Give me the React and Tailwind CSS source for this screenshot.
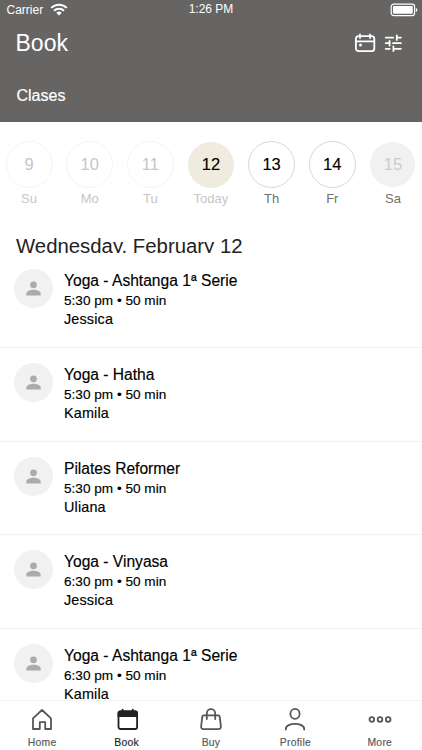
import React from 'react';

const days = [
  { n: '9', d: 'Su', circle: 'size-[47px] border border-[#f4f4f4] text-[#c6c6c6]', label: 'text-[#c6c6c6]' },
  { n: '10', d: 'Mo', circle: 'size-[47px] border border-[#f4f4f4] text-[#c6c6c6]', label: 'text-[#c6c6c6]' },
  { n: '11', d: 'Tu', circle: 'size-[47px] border border-[#f4f4f4] text-[#c6c6c6]', label: 'text-[#c6c6c6]' },
  { n: '12', d: 'Today', circle: 'size-[46px] bg-[#efebdf] text-black [-webkit-text-stroke:0.15px]', label: 'text-[#c6c6c6]' },
  { n: '13', d: 'Th', circle: 'size-[47px] border border-[#d8d8d8] text-black [-webkit-text-stroke:0.15px]', label: 'text-[#707070]' },
  { n: '14', d: 'Fr', circle: 'size-[47px] border border-[#d8d8d8] text-black [-webkit-text-stroke:0.15px]', label: 'text-[#707070]' },
  { n: '15', d: 'Sa', circle: 'size-[45px] bg-[#f1f1f1] text-[#cbcbcb]', label: 'text-[#707070]' },
];

const classes = [
  { title: 'Yoga - Ashtanga 1ª Serie', time: '5:30 pm • 50 min', who: 'Jessica' },
  { title: 'Yoga - Hatha', time: '5:30 pm • 50 min', who: 'Kamila' },
  { title: 'Pilates Reformer', time: '5:30 pm • 50 min', who: 'Uliana' },
  { title: 'Yoga - Vinyasa', time: '6:30 pm • 50 min', who: 'Jessica' },
  { title: 'Yoga - Ashtanga 1ª Serie', time: '6:30 pm • 50 min', who: 'Kamila' },
];

const stroke = { fill: 'none', stroke: 'currentColor', strokeWidth: 1.8, strokeLinecap: 'round', strokeLinejoin: 'round' };

function Wifi() {
  return (
    <svg width="18" height="13" viewBox="0 0 18 13" fill="none" stroke="white" strokeWidth="2">
      <path d="M1.2 4.9a11 11 0 0 1 15.6 0" />
      <path d="M4 7.8a7 7 0 0 1 10 0" />
      <path d="M9 12.5L6.3 9.8a3.9 3.9 0 0 1 5.4 0z" fill="white" stroke="none" />
    </svg>
  );
}

function Battery() {
  return (
    <svg width="28" height="14" viewBox="0 0 28 14">
      <rect x="1.2" y="1.2" width="23.4" height="11.4" rx="2.6" fill="none" stroke="white" strokeWidth="1.2" />
      <rect x="3" y="3" width="19.8" height="7.8" rx="1" fill="white" />
      <path d="M25.9 4.9c1.9.6 1.9 3.4 0 4z" fill="white" />
    </svg>
  );
}

function Calendar() {
  return (
    <svg width="22" height="20" viewBox="0 0 22 20" fill="none" stroke="white" strokeWidth="1.8" strokeLinecap="round">
      <rect x="1.9" y="3.1" width="18.4" height="15" rx="2.6" />
      <path d="M1.9 8.4h18.4M6 1.4v3.6M16 1.4v3.6" />
      <circle cx="6.5" cy="12" r="1.5" fill="white" stroke="none" />
    </svg>
  );
}

function Tune() {
  return (
    <svg width="18" height="18" viewBox="0 0 18 18" fill="none" stroke="white" strokeWidth="1.8" strokeLinecap="round">
      <path d="M1.7 3.6h7.6M13 3.6h3.9M12.8 1.3v4.6M1.7 9.2h3.6M9 9.2h7.9M5.6 6.9v4.6M1.7 14.8h4M9.6 14.8h7.3M9.4 12.5v4.6" />
    </svg>
  );
}

function Person() {
  return (
    <svg width="15" height="15" viewBox="0 0 15 15" fill="#ababab">
      <circle cx="7.5" cy="3.8" r="3.4" />
      <path d="M0.3 14.4v-1.8c0-2.4 4.1-3.8 7.2-3.8s7.2 1.4 7.2 3.8v1.8z" />
    </svg>
  );
}

const tabs = [
  {
    name: 'Home',
    icon: <path {...stroke} d="M4 11.4L13 3l9 8.4V22h-5.8v-6.8h-5.4V22H4z" />,
  },
  {
    name: 'Book',
    icon: (
      <g>
        <rect x="4.5" y="4.4" width="18.6" height="17.6" rx="2" {...stroke} />
        <path d="M3.6 10V6.2a2.6 2.6 0 0 1 2.6-2.6h15.2A2.6 2.6 0 0 1 24 6.2V10z" fill="currentColor" />
        <path d="M8.6 2.6v3M18.8 2.6v3" {...stroke} />
      </g>
    ),
  },
  {
    name: 'Buy',
    icon: (
      <g {...stroke}>
        <path d="M5.7 8.4h14.6a1.4 1.4 0 0 1 1.4 1.2l1.2 9.9a2.3 2.3 0 0 1-2.3 2.6H5.4a2.3 2.3 0 0 1-2.3-2.6l1.2-9.9a1.4 1.4 0 0 1 1.4-1.2z" />
        <path d="M8.8 12V6.4a4.2 4.2 0 0 1 8.4 0V12" />
      </g>
    ),
  },
  {
    name: 'Profile',
    icon: (
      <g {...stroke}>
        <ellipse cx="13" cy="6.9" rx="4.6" ry="5" />
        <path d="M3.8 22.5v-.6c0-6.8 18.4-6.8 18.4 0v.6" />
      </g>
    ),
  },
  {
    name: 'More',
    icon: (
      <g {...stroke}>
        <circle cx="4.8" cy="12.5" r="2.3" />
        <circle cx="13" cy="12.5" r="2.3" />
        <circle cx="21.2" cy="12.5" r="2.3" />
      </g>
    ),
  },
];

export default function App() {
  return (
    <div className="flex h-[750px] w-[422px] flex-col overflow-hidden bg-white font-['Liberation_Sans',Arial,sans-serif]">
      <header className="flex h-[122px] shrink-0 flex-col bg-[#666563] text-white">
        <div className="grid h-5 grid-cols-3 text-[12px] leading-5">
          <div className="flex items-start gap-[7px] pl-[6.5px]">
            <span>Carrier</span>
            <span className="pt-[3px]"><Wifi /></span>
          </div>
          <span className="text-center leading-[18px]">1:26 PM</span>
          <span className="flex justify-end pt-[3px] pr-[4px]"><Battery /></span>
        </div>
        <div className="flex h-[46px] items-center pr-5 pl-[15.5px]">
          <h1 className="flex-1 text-[23px] leading-[44px]">Book</h1>
          <div className="flex items-center gap-[8px]">
            <Calendar />
            <Tune />
          </div>
        </div>
        <div className="pt-[18px] pl-[16.5px] text-[16px] leading-[24px] [-webkit-text-stroke:0.2px]">Clases</div>
      </header>

      <div className="flex h-[110px] shrink-0 justify-between pt-[19px] pr-[5.5px] pl-[5.5px]">
        {days.map((day) => (
          <div key={day.n} className="flex w-[47px] flex-col items-center">
            <div className="flex size-[47px] items-center justify-center">
              <div className={`flex items-center justify-center rounded-full text-[16.5px] ${day.circle}`}>{day.n}</div>
            </div>
            <span className={`mt-px text-[13px] leading-5 ${day.label}`}>{day.d}</span>
          </div>
        ))}
      </div>

      <h2 className="mb-px h-[21px] shrink-0 overflow-hidden pl-4 text-[20.35px] leading-[29px] text-[#222]">Wednesday, February 12</h2>

      <main className="flex min-h-0 flex-1 flex-col overflow-hidden">
        {classes.map((c, i) => (
          <article key={i} className="flex h-[93.75px] shrink-0 border-b border-[#f1f1f1] pt-[15px] pl-[13.5px]">
            <div className="flex size-[39px] shrink-0 items-center justify-center rounded-full bg-[#f1f1f1]">
              <Person />
            </div>
            <div className="pl-[11.5px] text-black [-webkit-text-stroke:0.15px]">
              <h3 className="text-[15.6px] leading-[23px]">{c.title}</h3>
              <p className="text-[13.6px] leading-[18px]">{c.time}</p>
              <p className="text-[14.4px] leading-[19px] tracking-[0.15px]">{c.who}</p>
            </div>
          </article>
        ))}
      </main>

      <nav className="grid h-[50px] shrink-0 grid-cols-5 border-t border-[#f3f3f3] bg-white">
        {tabs.map((t) => (
          <div key={t.name} className={`flex flex-col items-center pt-[6px] ${t.name === 'Book' ? 'text-[#202124]' : 'text-[#55565a]'}`}>
            <svg width="26" height="25" viewBox="0 0 26 25">{t.icon}</svg>
            <span className="text-[10.4px] leading-[21px] tracking-[0.25px] [-webkit-text-stroke:0.15px]">{t.name}</span>
          </div>
        ))}
      </nav>
    </div>
  );
}
